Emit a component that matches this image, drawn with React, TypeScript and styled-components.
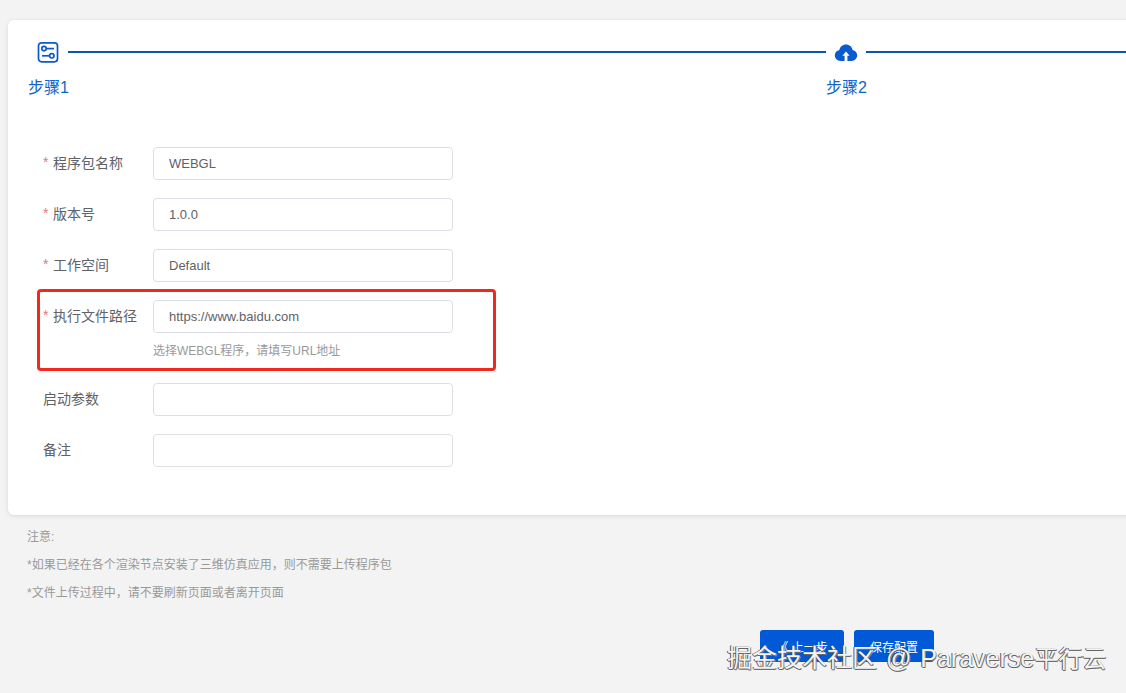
import React from "react";
import styled, { createGlobalStyle } from "styled-components";

const Global = createGlobalStyle`
  html, body { margin: 0; padding: 0; background: #f2f2f2; overflow: hidden; }
  body { font-family: "Liberation Sans", "Noto Sans CJK SC", sans-serif; }
  * { box-sizing: border-box; }
`;

const Page = styled.div`
  position: relative;
  width: 1126px;
  height: 693px;
  overflow: hidden;
  background: #f3f3f3;
  padding: 20px 0 0 8px;
`;

const Card = styled.section`
  width: 1140px;
  height: 495px;
  background: #fff;
  border-radius: 6px 0 0 6px;
  box-shadow: 0 1px 5px rgba(0, 0, 0, 0.1);
  padding: 12px 0 0 20px;
`;

const Steps = styled.div`
  display: flex;
  height: 115px;
`;

const Step = styled.div<{ $width: number }>`
  flex: 0 0 ${(p) => p.$width}px;
  display: flex;
  flex-direction: column;
`;

const StepHead = styled.div`
  display: flex;
  align-items: center;
  height: 40px;
`;

const IconCell = styled.div`
  flex: 0 0 40px;
  display: flex;
  align-items: center;
  justify-content: center;
`;

const Line = styled.div`
  flex: 1;
  height: 2px;
  background: #0958b0;
`;

const StepLabel = styled.div`
  margin-top: 4px;
  font-size: 16px;
  line-height: 24px;
  color: #1464c8;
  white-space: nowrap;
`;

const Form = styled.form`
  display: flex;
  flex-direction: column;
  padding-left: 15px;
`;

const Row = styled.div`
  position: relative;
  display: flex;
  min-height: 33px;
  margin-bottom: 18px;
`;

const Label = styled.label`
  flex: 0 0 110px;
  display: flex;
  align-items: center;
  height: 30px;
  font-size: 14px;
  color: #606266;
  white-space: nowrap;
`;

const Star = styled.span`
  width: 10px;
  color: #e4797c;
  font-size: 14px;
`;

const Field = styled.div`
  display: flex;
  flex-direction: column;
`;

const Input = styled.input`
  width: 300px;
  height: 33px;
  padding: 0 15px;
  border: 1px solid #dcdfe6;
  border-radius: 4px;
  background: #fff;
  font: 13px "Liberation Sans", "Noto Sans CJK SC", sans-serif;
  color: #606266;
  outline: none;
`;

const Hint = styled.div`
  margin-top: 9px;
  height: 23px;
  font-size: 12px;
  line-height: 18px;
  color: #999;
  white-space: nowrap;
`;

const Highlight = styled.div`
  position: absolute;
  left: -6px;
  top: -11px;
  width: 459px;
  height: 82px;
  border: 3px solid #f0281e;
  border-radius: 4px;
  pointer-events: none;
`;

const Notes = styled.div`
  padding: 8px 0 0 19px;
  font-size: 12px;
  line-height: 28px;
  color: #999;
  white-space: nowrap;
`;

const Footer = styled.div`
  display: flex;
  gap: 10px;
  padding-left: 752px;
  margin-top: 23px;
`;

const Button = styled.button<{ $w: number }>`
  width: ${(p) => p.$w}px;
  height: 32px;
  padding: 0;
  border: none;
  border-radius: 3px;
  background: #0059d6;
  color: #fff;
  font: 12px "Liberation Sans", "Noto Sans CJK SC", sans-serif;
  white-space: nowrap;
`;

const Watermark = styled.div`
  position: absolute;
  left: 727px;
  top: 642px;
  font-size: 25px;
  line-height: 32px;
  color: #f4f4f4;
  word-spacing: 2px;
  white-space: nowrap;
  text-shadow: -1px 0 #555, 0 1px #666, 1px 1px #888;
`;

const WatermarkTail = styled.span`
  font-size: 24px;
`;

const SliderIcon = () => (
  <svg width="22" height="22" viewBox="0 0 22 22" fill="none" stroke="#0a5bc8" strokeWidth="1.7">
    <rect x="1.5" y="1.8" width="19" height="19" rx="3" />
    <circle cx="7" cy="7.6" r="2.2" />
    <path d="M9.5 7.600H17" />
    <circle cx="14.800" cy="14.800" r="2.200" />
    <path d="M5 14.800H12.400" />
  </svg>
);

const CloudIcon = () => (
  <svg width="24" height="18" viewBox="0 0 24 18" style={{ marginTop: 2 }}>
    <path
      fill="#0a5bd0"
      d="M12 .5c3.400 0 6 2.300 6.600 5.400 2.600.5 4.600 2.700 4.600 5.400 0 3-2.500 5.700-5.600 5.700H6.400C3.300 17 .8 14.300.8 11.300c0-2.700 2-4.900 4.600-5.400C6 2.800 8.600.5 12 .5z"
    />
    <path fill="#fff" d="M12 7.500l-3.600 4.300h2.200V17h2.800v-5.200h2.200z" />
  </svg>
);

const fields = [
  { label: "程序包名称", value: "WEBGL", required: true },
  { label: "版本号", value: "1.0.0", required: true },
  { label: "工作空间", value: "Default", required: true },
  {
    label: "执行文件路径",
    value: "https://www.baidu.com",
    required: true,
    hint: "选择WEBGL程序，请填写URL地址",
  },
  { label: "启动参数", value: "" },
  { label: "备注", value: "" },
];

export default function App() {
  return (
    <Page>
      <Global />
      <Card>
        <Steps>
          <Step $width={798}>
            <StepHead>
              <IconCell>
                <SliderIcon />
              </IconCell>
              <Line />
            </StepHead>
            <StepLabel>步骤1</StepLabel>
          </Step>
          <Step $width={320}>
            <StepHead>
              <IconCell>
                <CloudIcon />
              </IconCell>
              <Line />
            </StepHead>
            <StepLabel>步骤2</StepLabel>
          </Step>
        </Steps>
        <Form>
          {fields.map((f) => (
            <Row key={f.label}>
              {f.hint && <Highlight />}
              <Label>
                {f.required && <Star>*</Star>}
                {f.label}
              </Label>
              <Field>
                <Input defaultValue={f.value} />
                {f.hint && <Hint>{f.hint}</Hint>}
              </Field>
            </Row>
          ))}
        </Form>
      </Card>
      <Notes>
        <div>注意:</div>
        <div>*如果已经在各个渲染节点安装了三维仿真应用，则不需要上传程序包</div>
        <div>*文件上传过程中，请不要刷新页面或者离开页面</div>
      </Notes>
      <Footer>
        <Button $w={84} type="button">《 上一步</Button>
        <Button $w={80} type="button">保存配置</Button>
      </Footer>
      <Watermark>
        掘金技术社区 @ Paraverse<WatermarkTail>平行云</WatermarkTail>
      </Watermark>
    </Page>
  );
}
